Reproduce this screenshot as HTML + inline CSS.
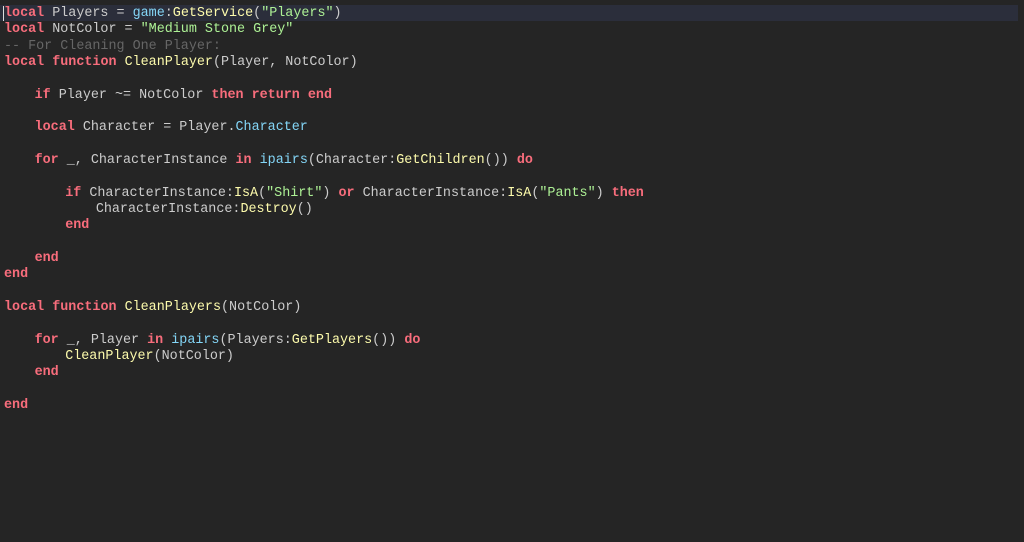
<!DOCTYPE html>
<html><head><meta charset="utf-8"><style>
html,body{margin:0;padding:0;background:#252525;width:1024px;height:542px;overflow:hidden}
pre{margin:0;padding:6px 0 0 4px;font-family:"Liberation Mono","DejaVu Sans Mono",monospace;font-size:13.4px;line-height:16.33px;color:#cccccc;position:relative;tab-size:30.6px;-moz-tab-size:30.6px}
.hl{position:absolute;left:0;top:5px;width:1018px;height:16.33px;background:#2b2e3b}
.cur{position:absolute;left:3px;top:6px;width:1px;height:15px;background:#ddd}
.k{color:#f86d7c;font-weight:bold}
.f{color:#fdfbac}
.s{color:#adf195}
.b{color:#84d6f7}
.c{color:#666666}
span{position:relative}
</style></head><body>
<div class="hl"></div><div class="cur"></div>
<pre><span class="k">local</span> Players = <span class="b">game</span>:<span class="f">GetService</span>(<span class="s">"Players"</span>)
<span class="k">local</span> NotColor = <span class="s">"Medium Stone Grey"</span>
<span class="c">-- For Cleaning One Player:</span>
<span class="k">local</span> <span class="k">function</span> <span class="f">CleanPlayer</span>(Player, NotColor)

	<span class="k">if</span> Player ~= NotColor <span class="k">then</span> <span class="k">return</span> <span class="k">end</span>

	<span class="k">local</span> Character = Player.<span class="b">Character</span>

	<span class="k">for</span> _, CharacterInstance <span class="k">in</span> <span class="b">ipairs</span>(Character:<span class="f">GetChildren</span>()) <span class="k">do</span>

		<span class="k">if</span> CharacterInstance:<span class="f">IsA</span>(<span class="s">"Shirt"</span>) <span class="k">or</span> CharacterInstance:<span class="f">IsA</span>(<span class="s">"Pants"</span>) <span class="k">then</span>
			CharacterInstance:<span class="f">Destroy</span>()
		<span class="k">end</span>

	<span class="k">end</span>
<span class="k">end</span>

<span class="k">local</span> <span class="k">function</span> <span class="f">CleanPlayers</span>(NotColor)

	<span class="k">for</span> _, Player <span class="k">in</span> <span class="b">ipairs</span>(Players:<span class="f">GetPlayers</span>()) <span class="k">do</span>
		<span class="f">CleanPlayer</span>(NotColor)
	<span class="k">end</span>

<span class="k">end</span></pre>
</body></html>
